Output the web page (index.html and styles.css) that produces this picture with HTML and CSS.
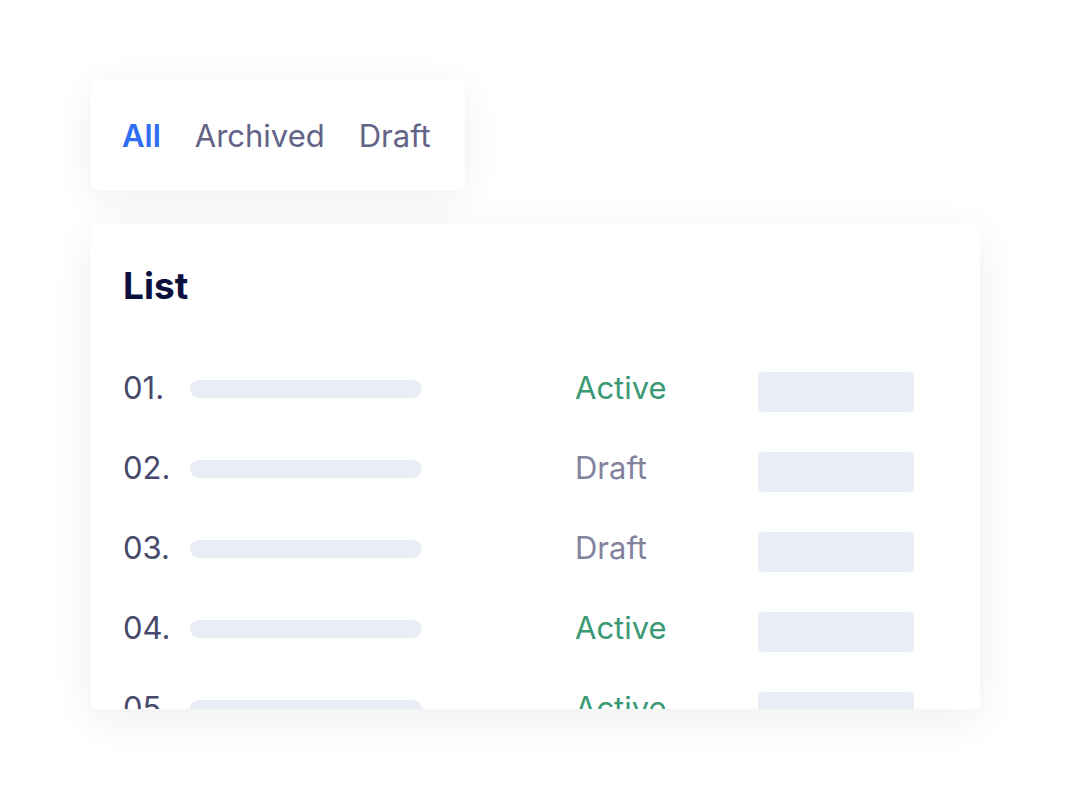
FILE: index.html
```html
<!DOCTYPE html>
<html lang="en">
<head>
<meta charset="utf-8">
<title>List</title>
<link rel="stylesheet" href="styles.css">
</head>
<body>
<div class="page">
  <div class="tabs">
    <span class="tab tab-active">All</span>
    <span class="tab">Archived</span>
    <span class="tab">Draft</span>
  </div>
  <div class="card">
    <h1 class="title">List</h1>
    <div class="rows">
      <div class="row"><span class="num">01.</span><span class="bar"></span><span class="status active">Active</span><span class="block"></span></div>
      <div class="row"><span class="num">02.</span><span class="bar"></span><span class="status draft">Draft</span><span class="block"></span></div>
      <div class="row"><span class="num">03.</span><span class="bar"></span><span class="status draft">Draft</span><span class="block"></span></div>
      <div class="row"><span class="num">04.</span><span class="bar"></span><span class="status active">Active</span><span class="block"></span></div>
      <div class="row"><span class="num">05.</span><span class="bar"></span><span class="status active">Active</span><span class="block"></span></div>
    </div>
  </div>
</div>
</body>
</html>
```

FILE: styles.css
```css
* { box-sizing: border-box; }
html, body { margin: 0; padding: 0; background: #ffffff; }
body { font-family: Inter, "Noto Sans", sans-serif; }

.page {
  width: 1070px;
  height: 790px;
  padding: 80px 0 0 91px;
  display: flex;
  flex-direction: column;
  align-items: flex-start;
  gap: 33px;
}

.tabs {
  width: 374px;
  height: 111px;
  background: #fff;
  border-radius: 8px;
  box-shadow: 0 8px 40px rgba(30, 30, 60, 0.07);
  display: flex;
  align-items: center;
  gap: 34px;
  padding: 0 31px;
}
.tab {
  font-size: 31px;
  line-height: 36px;
  color: #626386;
  font-weight: 400;
}
.tab-active {
  color: #2e6ff2;
  font-weight: 600;
}

.card {
  width: 889px;
  height: 485px;
  background: #fff;
  border-radius: 8px 8px 0 0;
  box-shadow: 0 10px 44px rgba(30, 30, 60, 0.07);
  overflow: hidden;
  padding: 39px 32px 0;
}
.title {
  margin: 0;
  font-size: 37px;
  line-height: 46px;
  font-weight: 700;
  color: #0a0f3d;
}
.rows {
  margin-top: 39px;
  display: flex;
  flex-direction: column;
}
.row {
  height: 80px;
  display: flex;
  align-items: center;
}
.num {
  width: 67px;
  font-size: 31px;
  line-height: 36px;
  color: #47496b;
}
.bar {
  width: 232px;
  height: 18px;
  border-radius: 9px;
  background: #e9edf5;
  margin-top: 2px;
}
.status {
  margin-left: 153px;
  width: 183px;
  font-size: 31px;
  line-height: 36px;
}
.status.active { color: #3a9a74; }
.status.draft { color: #83839e; }
.block {
  width: 156px;
  height: 40px;
  border-radius: 4px;
  background: #e9edf5;
  margin-top: 8px;
}
```
